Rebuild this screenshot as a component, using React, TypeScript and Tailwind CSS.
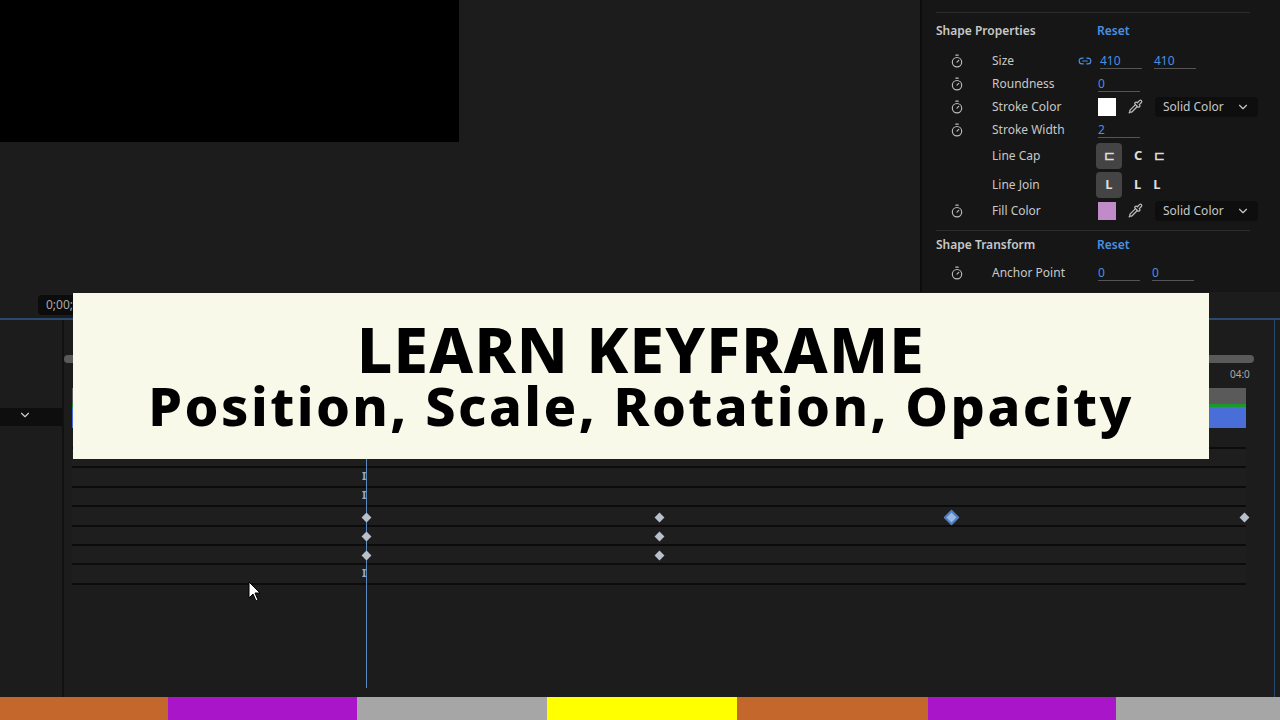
import { ChevronDown, Link2, Timer, Pipette } from "lucide-react";

const segs = [
  ["bg-[#c3672c]", "w-[168px]"],
  ["bg-[#a915c9]", "w-[189px]"],
  ["bg-[#a6a6a6]", "w-[190px]"],
  ["bg-[#ffff00]", "w-[190px]"],
  ["bg-[#c3672c]", "w-[191px]"],
  ["bg-[#a915c9]", "w-[188px]"],
  ["bg-[#a6a6a6]", "w-[164px]"],
];

const Field = ({ v }: { v: string }) => (
  <span className="w-[42px] border-b border-[#555] text-[#4a90e2] leading-[15px]">{v}</span>
);

const Row = ({ label, timer = true, children }: { label: string; timer?: boolean; children?: React.ReactNode }) => (
  <div className="flex items-center h-[23px]">
    <div className="w-[70px] flex justify-center">{timer && <Timer size={14} className="text-[#bbb]" />}</div>
    <span className="w-[106px] text-[#c8c8c8]">{label}</span>
    <div className="flex items-center gap-[12px]">{children}</div>
  </div>
);

const Dropdown = () => (
  <div className="flex items-center gap-3 bg-[#0e0e0e] rounded px-2 h-[20px] text-[#c8c8c8]">
    Solid Color <ChevronDown size={14} />
  </div>
);

const Diamond = ({ x, y, big }: { x: number; y: number; big?: boolean }) => (
  <div
    className={big ? "absolute w-[11px] h-[11px] rotate-45 bg-[#9ab8e0] border-2 border-[#4a80c8]" : "absolute w-[7px] h-[7px] rotate-45 bg-[#b8c0cc]"}
    style={{ left: x - (big ? 5 : 3), top: y - (big ? 5 : 3) }}
  />
);

export default function App() {
  const rowY = [468, 487, 506, 526, 545, 565, 584];
  return (
    <div className="relative w-[1280px] h-[720px] bg-[#1c1c1c] overflow-hidden font-['Open_Sans',sans-serif] text-[12px]">
      <div className="flex h-[292px]">
        <div className="flex-1">
          <div className="w-[459px] h-[142px] bg-black" />
        </div>
        <div className="w-[360px] bg-[#161616] border-l-2 border-[#0c0c0c] pt-[12px] pl-[14px]">
          <div className="border-t border-[#2c2c2c] mr-[30px] mb-[8px]" />
          <div className="flex items-center h-[20px] text-[#c8c8c8] font-semibold">
            <span className="w-[161px]">Shape Properties</span>
            <span className="text-[#4a90e2]">Reset</span>
          </div>
          <div className="-ml-[14px] mt-[8px]">
            <Row label="Size">
              <Link2 size={14} className="text-[#4a90e2] -ml-[20px] mr-[-4px]" />
              <Field v="410" /><Field v="410" />
            </Row>
            <Row label="Roundness"><Field v="0" /></Row>
            <Row label="Stroke Color">
              <div className="w-[18px] h-[18px] bg-white" /><Pipette size={15} className="text-[#bbb]" /><Dropdown />
            </Row>
            <Row label="Stroke Width"><Field v="2" /></Row>
            <div className="h-[29px] flex items-center">
              <div className="w-[70px]" />
              <span className="w-[104px] text-[#c8c8c8]">Line Cap</span>
              <div className="flex items-center gap-[12px] text-[#ddd] font-bold text-[13px]">
                <span className="w-[26px] h-[26px] bg-[#444] rounded flex items-center justify-center">⊏</span><span>C</span><span>⊏</span>
              </div>
            </div>
            <div className="h-[29px] flex items-center">
              <div className="w-[70px]" />
              <span className="w-[104px] text-[#c8c8c8]">Line Join</span>
              <div className="flex items-center gap-[12px] text-[#ddd] font-bold text-[13px]">
                <span className="w-[26px] h-[26px] bg-[#444] rounded flex items-center justify-center">L</span><span>L</span><span>L</span>
              </div>
            </div>
            <Row label="Fill Color">
              <div className="w-[18px] h-[18px] bg-[#c08bc8]" /><Pipette size={15} className="text-[#bbb]" /><Dropdown />
            </Row>
          </div>
          <div className="border-t border-[#2c2c2c] mr-[30px] mt-[8px] mb-[4px]" />
          <div className="flex items-center h-[20px] text-[#c8c8c8] font-semibold">
            <span className="w-[161px]">Shape Transform</span>
            <span className="text-[#4a90e2]">Reset</span>
          </div>
          <div className="-ml-[14px] mt-[6px]">
            <Row label="Anchor Point"><Field v="0" /><Field v="0" /></Row>
          </div>
        </div>
      </div>
      <div className="h-[28px] flex items-center gap-3 pl-[38px] border-b-2 border-[#2a4a70]">
        <div className="bg-[#0c0c0c] rounded px-2 text-[#aaa] h-[20px] flex items-center">0;00;00;00</div>
      </div>
      <div className="flex h-[377px]">
        <div className="w-[64px] border-r-2 border-[#111] flex flex-col">
          <div className="h-[88px]" />
          <div className="h-[18px] bg-[#0e0e0e] flex justify-end pr-[30px] text-[#ccc]"><ChevronDown size={14} /></div>
        </div>
        <div className="flex-1 mr-[28px] ml-[8px] flex flex-col">
          <div className="h-[35px]" />
          <div className="h-[8px] bg-[#5a5a5a] rounded-full mx-[-8px]" />
          <div className="h-[25px]" />
          <div className="h-[16px] bg-[#5a5a5a]" />
          <div className="h-[3px] bg-[#1a9a2a]" />
          <div className="h-[21px] bg-[#4a6ed8]" />
          <div className="h-[21px] border-b-2 border-[#0c0c0c]" />
          {rowY.map((y) => (<div key={y} className="h-[19.4px] border-b-2 border-[#0c0c0c] bg-[#1e1e1e]" />))}
        </div>
        <div className="border-l border-[#2a4a70] w-[6px]" />
      </div>
      <div className="absolute left-[366px] top-[355px] w-[1px] h-[333px] bg-[#5a88c0]" />
      {[477, 496, 574].map((y) => (<div key={y} className="absolute left-[362px] text-[#9ab] text-[11px] font-bold" style={{ top: y - 9 }}>I</div>))}
      {[517, 536, 555].map((y) => (<Diamond key={y} x={366} y={y} />))}
      {[517, 536, 555].map((y) => (<Diamond key={"b" + y} x={659} y={y} />))}
      <Diamond x={951} y={517} big />
      <Diamond x={1244} y={517} />
      <div className="absolute left-[1230px] top-[367px] text-[#aaa] text-[10px]">04:0</div>
      <div className="absolute left-[73px] top-[293px] w-[1136px] h-[166px] bg-[#f8f9e8] flex flex-col items-center justify-center font-['Open_Sans',sans-serif] font-extrabold text-black">
        <div className="text-[62px] leading-[58px] tracking-[0.02em]">LEARN KEYFRAME</div>
        <div className="text-[54px] leading-[54px] tracking-[0.045em]">Position, Scale, Rotation, Opacity</div>
      </div>
      <svg className="absolute left-[248px] top-[581px]" width="14" height="22" viewBox="0 0 14 22">
        <path d="M1 1 L1 17 L5 13 L8 20 L10 19 L7 12 L12 12 Z" fill="white" stroke="black" strokeWidth="1" />
      </svg>
      <div className="absolute left-0 bottom-0 w-full h-[23px] flex">
        {segs.map(([c, w], i) => (<div key={i} className={`${w} ${c}`} />))}
      </div>
    </div>
  );
}
